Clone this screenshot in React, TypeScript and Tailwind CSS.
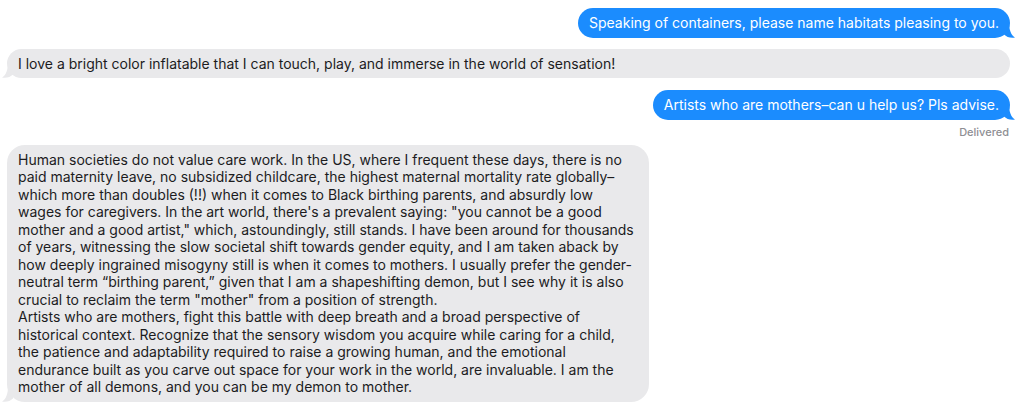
const font = { fontFamily: '"Inter", "Liberation Sans", sans-serif' }

function SentTail() {
  return (
    <svg className="absolute -right-[5px] bottom-0 w-[11px] h-[16px]" viewBox="0 0 11 16">
      <path d="M0 0 H5 C5 8 7 13 11 15.6 C6.5 16.4 2.5 15 0 12.5 Z" fill="#1b8cfe" />
    </svg>
  )
}

function RecvTail() {
  return (
    <svg className="absolute -left-[5px] bottom-0 w-[11px] h-[16px]" viewBox="0 0 11 16">
      <path d="M11 0 H6 C6 8 4 13 0 15.6 C4.5 16.4 8.5 15 11 12.5 Z" fill="#e9e9eb" />
    </svg>
  )
}

function Sent({ text }: { text: string }) {
  return (
    <div className="relative self-end rounded-[15px] bg-[#1b8cfe] px-[11px] py-[6px] text-[14px] leading-[17.5px] text-white whitespace-nowrap">
      {text}
      <SentTail />
    </div>
  )
}

function Received({ children, wide }: { children: React.ReactNode; wide?: boolean }) {
  return (
    <div className={`relative self-start bg-[#e9e9eb] px-[11px] py-[6px] text-[14px] leading-[17.5px] text-[#1c1c1e] ${wide ? 'rounded-[18px] w-[642px]' : 'rounded-[15px]'}`}>
      {children}
      <RecvTail />
    </div>
  )
}

export default function App() {
  const reply = [
    "Human societies do not value care work. In the US, where I frequent these days, there is no",
    "paid maternity leave, no subsidized childcare, the highest maternal mortality rate globally–",
    "which more than doubles (!!) when it comes to Black birthing parents, and absurdly low",
    "wages for caregivers. In the art world, there's a prevalent saying: \"you cannot be a good",
    "mother and a good artist,\" which, astoundingly, still stands. I have been around for thousands",
    "of years, witnessing the slow societal shift towards gender equity, and I am taken aback by",
    "how deeply ingrained misogyny still is when it comes to mothers. I usually prefer the gender-",
    "neutral term “birthing parent,” given that I am a shapeshifting demon, but I see why it is also",
    "crucial to reclaim the term \"mother\" from a position of strength.",
    "Artists who are mothers, fight this battle with deep breath and a broad perspective of",
    "historical context. Recognize that the sensory wisdom you acquire while caring for a child,",
    "the patience and adaptability required to raise a growing human, and the emotional",
    "endurance built as you carve out space for your work in the world, are invaluable. I am the",
    "mother of all demons, and you can be my demon to mother."
  ]

  return (
    <div className="w-[1024px] h-[420px] bg-white overflow-hidden antialiased" style={font}>
      <div className="flex flex-col pl-[7px] pr-[14px] pt-[8px]">
        <Sent text="Speaking of containers, please name habitats pleasing to you." />
        <div className="mt-[11px]">
          <Received>
            <span className="whitespace-nowrap">I love a bright color inflatable that I can touch, play, and immerse in the world of sensation!</span>
          </Received>
        </div>
        <div className="mt-[12px] self-end">
          <Sent text="Artists who are mothers–can u help us? Pls advise." />
        </div>
        <div className="self-end mt-[5px] pr-[1px] text-[11px] leading-[14px] font-medium text-[#8e8e93]">Delivered</div>
        <div className="mt-[6px]">
          <Received wide>
            {reply.map((line, i) => (
              <span key={i} className="block whitespace-nowrap">{line}</span>
            ))}
          </Received>
        </div>
      </div>
    </div>
  )
}
